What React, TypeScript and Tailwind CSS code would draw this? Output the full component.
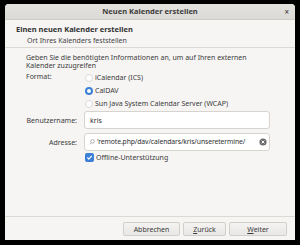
import React from 'react';

const font = { fontFamily: '"Noto Sans", "DejaVu Sans", sans-serif' };

const Radio = ({ checked, label }: { checked?: boolean; label: string }) => (
  <div className="flex items-center h-[13px] gap-[2px]">
    <span
      className={
        checked
          ? 'w-[8px] h-[8px] rounded-full border-[2px] border-[#3c7fd6] bg-white'
          : 'w-[8px] h-[8px] rounded-full border border-[#dcdad6] bg-white'
      }
    />
    <span>{label}</span>
  </div>
);

const Button = ({ children, w }: { children: React.ReactNode; w: string }) => (
  <button
    className={`${w} h-[14px] rounded-[2px] border border-[#d2cfcb] bg-gradient-to-b from-[#f4f3f2] to-[#e9e7e5] text-[7px] text-[#3a3a3a] leading-none`}
  >
    {children}
  </button>
);

export default function App() {
  return (
    <div className="w-[300px] h-[245px] bg-black pt-[4px] px-[5px]" style={font}>
      <div className="w-[290px] h-[236px] bg-[#f6f5f4] rounded-t-[4px] flex flex-col text-[#3b3b3b] text-[7px] leading-none">
        {/* title bar */}
        <div className="h-[16px] rounded-t-[4px] bg-gradient-to-b from-[#e4e2df] to-[#dcdad6] border-b border-[#cfccc8] flex items-center justify-center relative">
          <span className="font-bold text-[7.5px] text-[#3d3d3d]">Neuen Kalender erstellen</span>
          <span className="absolute right-[6px] top-[4px] text-[8px] font-bold text-[#555]">×</span>
        </div>
        {/* header */}
        <div className="h-[28px] border-b border-[#dcd9d5] pl-[11px] pt-[6px] flex flex-col gap-[3px]">
          <span className="font-bold text-[7.5px] text-[#333]">Einen neuen Kalender erstellen</span>
          <span className="pl-[11px] text-[#444]">Ort Ihres Kalenders feststellen</span>
        </div>
        {/* body */}
        <div className="flex-1 pl-[21px] pt-[6px]">
          <p className="leading-[8px] w-[240px]">
            Geben Sie die benötigten Informationen an, um auf Ihren externen Kalender zuzugreifen
          </p>
          <div className="flex mt-[1px]">
            <span className="w-[59px] pt-[2px]">Format:</span>
            <div className="flex flex-col">
              <Radio label="iCalendar (ICS)" />
              <Radio checked label="CalDAV" />
              <Radio label="Sun Java System Calendar Server (WCAP)" />
            </div>
          </div>
          <div className="flex items-center mt-[1px] -ml-[11px]">
            <span className="w-[69px] text-right pr-[7px]">Benutzername:</span>
            <div className="w-[186px] h-[18px] bg-white border border-[#d7d4d0] rounded-[3px] flex items-center pl-[5px] text-[#2e2e2e]">
              kris
            </div>
          </div>
          <div className="flex items-center mt-[4px] -ml-[11px]">
            <span className="w-[69px] text-right pr-[7px]">Adresse:</span>
            <div className="w-[186px] h-[18px] bg-white border border-[#d7d4d0] rounded-[3px] flex items-center pl-[4px] pr-[2px] gap-[2px] text-[#2e2e2e]">
              <svg width="6" height="6" viewBox="0 0 10 10" className="shrink-0">
                <circle cx="6" cy="4" r="3" fill="none" stroke="#999" strokeWidth="1.2" />
                <line x1="4" y1="6" x2="1" y2="9" stroke="#999" strokeWidth="1.2" />
              </svg>
              <span className="whitespace-nowrap flex-1 text-[6.8px] tracking-[-0.1px]">'remote.php/dav/calendars/kris/unseretermine/</span>
              <svg width="8" height="8" viewBox="0 0 10 10" className="shrink-0">
                <circle cx="5" cy="5" r="4.5" fill="#6b6b6b" />
                <path d="M3.3 3.3 L6.7 6.7 M6.7 3.3 L3.3 6.7" stroke="#fff" strokeWidth="1.2" />
              </svg>
            </div>
          </div>
          <div className="flex items-center mt-[2px] ml-[59px] gap-[2px]">
            <span className="w-[9px] h-[9px] rounded-[2px] bg-[#3c7fd6] flex items-center justify-center">
              <svg width="7" height="7" viewBox="0 0 10 10">
                <path d="M2 5 L4.2 7.3 L8.2 2.7" fill="none" stroke="#fff" strokeWidth="1.8" />
              </svg>
            </span>
            <span>Offline-Unterstützung</span>
          </div>
        </div>
        {/* footer */}
        <div className="h-[24px] border-t border-[#dcd9d5] flex items-start justify-end gap-[3px] pr-[8px] pt-[5px]">
          <Button w="w-[57px]">Abbrechen</Button>
          <Button w="w-[43px]">
            <span className="underline">Z</span>urück
          </Button>
          <Button w="w-[58px]">
            <span className="underline">W</span>eiter
          </Button>
        </div>
      </div>
    </div>
  );
}
